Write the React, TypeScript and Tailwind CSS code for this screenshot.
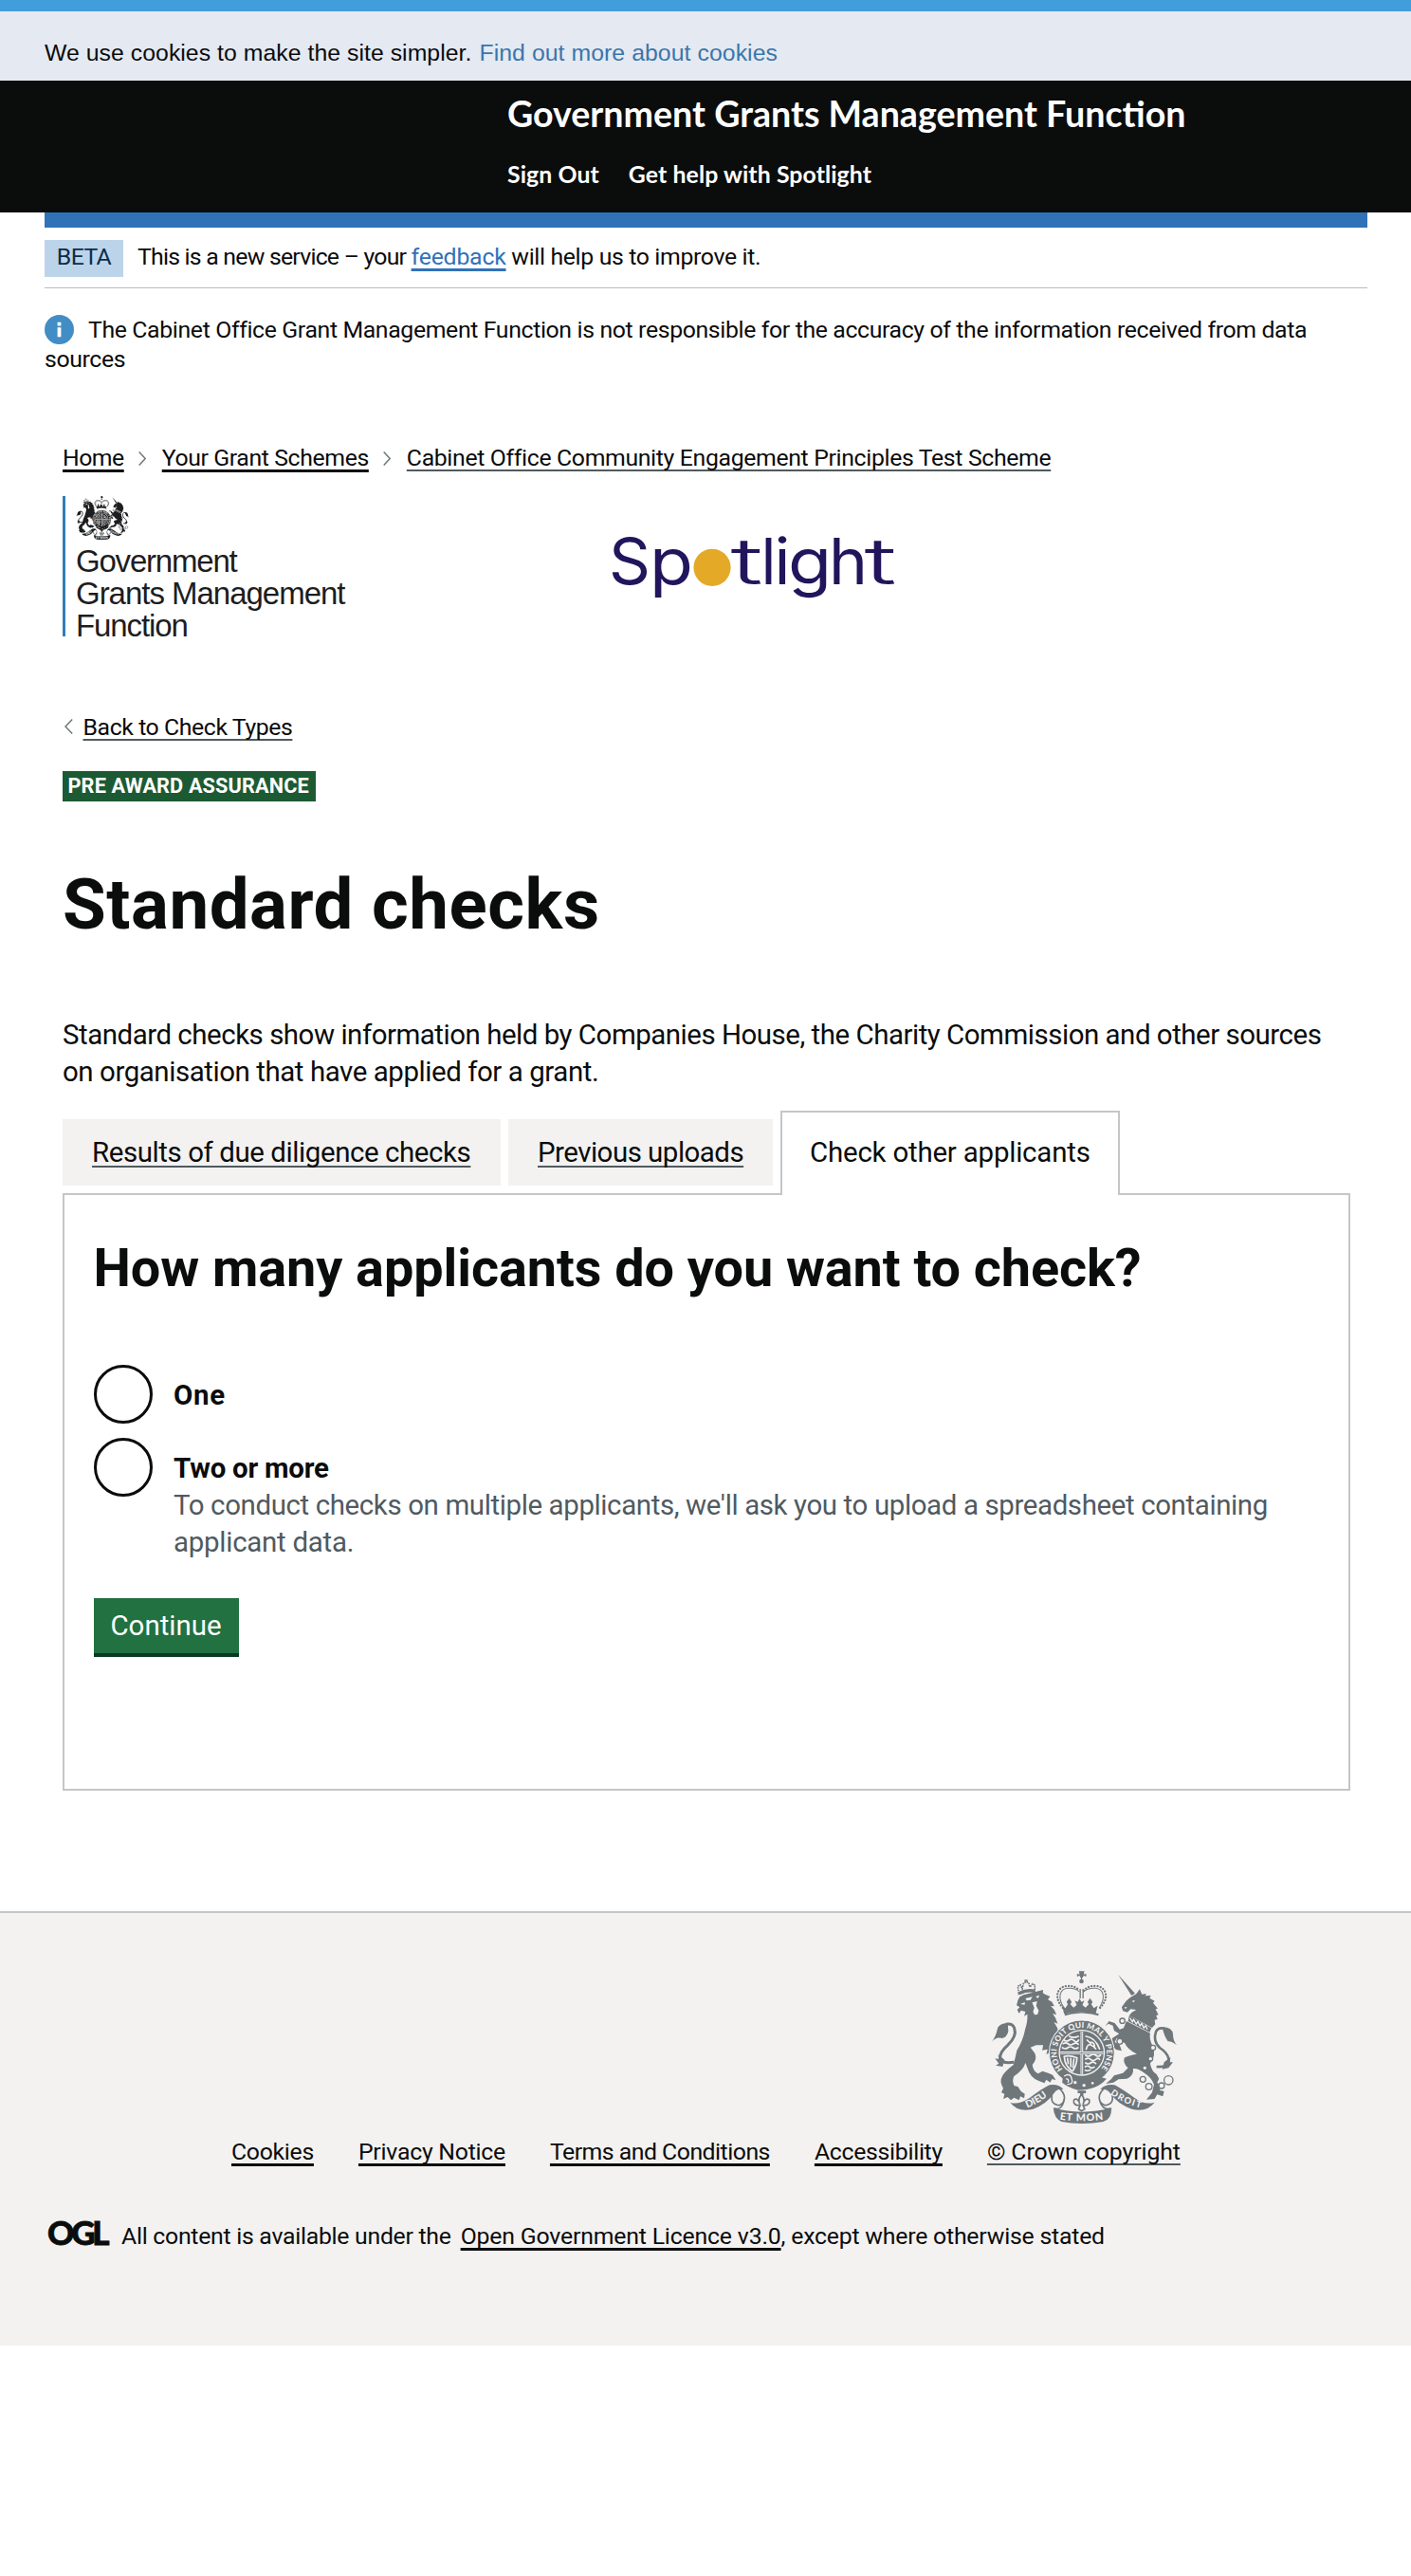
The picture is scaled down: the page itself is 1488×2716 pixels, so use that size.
import React from 'react';

const LINK = 'underline underline-offset-[4px] decoration-[3px] [text-decoration-skip-ink:none] whitespace-nowrap';
const THIN = 'underline underline-offset-[4px] decoration-[1.6px] decoration-[#505a5f] [text-decoration-skip-ink:none] whitespace-nowrap';

/** Royal coat of arms: `bg` is used for the parts knocked out of the silhouette. */
function Crest({ id, color, bg, className }: { id: string; color: string; bg: string; className: string }) {
  return (
    <svg viewBox="75 55 587 483" preserveAspectRatio="none" className={className} fill={color} aria-hidden="true">
      <defs>
        <path id={id + '-ring'} d="M302 366 A79 79 0 1 1 408 378" fill="none" />
        <path id={id + '-left'} d="M189 488 Q237 470 270 436" fill="none" />
        <path id={id + '-right'} d="M452 444 Q490 474 546 488" fill="none" />
        <path id={id + '-mid'} d="M292 525 Q361 535 434 525" fill="none" />
      </defs>

      {/* crown */}
      <path d="M358 76 l-3 -6 -8 3 v-9 l8 2 -2 -10 h17 l-2 10 8 -2 v9 l-8 -3 -3 6z" />
      <circle cx="361" cy="88" r="7" />
      <path d="M359 70 h4 v14 h-4z" />
      <g fill="none" stroke={color} strokeWidth="7" strokeLinecap="round">
        <path d="M302 172 C270 135 288 104 315 103 C335 102 345 106 354 118" strokeDasharray="0.1 9.5" />
        <path d="M420 172 C454 135 434 104 408 103 C388 102 378 106 368 118" strokeDasharray="0.1 9.5" />
      </g>
      <path d="M306 172 C284 140 292 112 318 110 C335 109 346 112 354 121 M417 172 C439 140 431 112 405 110 C388 109 377 112 368 121" fill="none" stroke={color} strokeWidth="3" />
      <path d="M355 112 h4 v30 h-4z M364 112 h4 v30 h-4z" />
      <path d="M300 165 l10 8 8 -12 -4 -8 8 -12 8 12 -4 8 10 10 10 -8 -6 -14 9 4 6 -10 6 10 9 -4 -6 14 10 8 10 -10 -4 -8 8 -12 8 12 -4 8 8 12 12 -8 -6 26 Q361 180 306 191z" />
      <path d="M308 190 Q361 180 415 190 L413 206 Q361 192 309 206z" />

      {/* lion */}
      <path d="M160 148 L166 137 178 131 205 124 240 115 239 125 246 129 262 136 255 146 268 153 275 167 264 166 275 178 282 194 270 190 279 204 286 222 274 217 285 236 288 250 Q272 262 266 280 L292 296 288 330 276 341 267 336 271 325 258 329 263 313 250 319 254 303 237 306 240 290 218 290 200 297 214 316 Q222 334 206 352 Q208 372 224 380 L238 372 258 379 270 384 280 401 268 397 262 408 250 399 244 410 228 404 Q200 396 190 362 L184 346 Q178 368 148 388 Q141 402 148 418 L160 421 170 436 182 444 180 458 168 452 164 464 148 456 138 464 128 454 114 460 118 444 108 440 114 426 Q100 406 112 386 Q120 372 146 352 Q152 330 157 306 Q176 276 183 240 Q192 212 190 192 L180 198 184 184 170 180 164 190 158 178 166 170 156 164z" />
      <path d="M184 142 l22 -5 -6 10 -12 2z M216 136 l12 -4 -4 10z" fill={bg} />
      <path d="M205 155 l16 -4 -3 14 8 16 -4 12 -9 1 -5 -10 4 -12z M168 160 l14 -6 0 8z" fill={bg} />
      <path d="M163 126 L160 104 168 99 174 112 178 94 186 90 194 92 198 106 207 96 214 100 213 122 Q190 116 163 128z" fill="none" stroke={color} strokeWidth="5" strokeDasharray="5 2.5" />
      <path d="M164 120 Q190 108 214 114 L214 123 Q190 118 166 131z" />
      <path d="M181 83 h10 v6 h-10z" />
      <path d="M148 344 Q108 350 104 330 Q103 312 128 290 Q158 262 149 236 Q143 220 122 224" fill="none" stroke={color} strokeWidth="9" />
      <path d="M128 220 Q100 220 95 240 Q92 260 77 280 Q92 262 110 268 Q126 264 130 246z" />
      <path d="M118 336 L98 320 100 334 88 332 100 348 90 354 112 358z" />

      {/* unicorn */}
      <path d="M477 67 L530 126 519 133z" />
      <path d="M545 113 L552 129 566 127 562 134 580 133 576 141 592 150 587 156 602 174 595 176 604 194 597 196 601 208 592 210 594 224 584 235 L512 196 Q520 184 534 178 L516 176 506 186 492 182 488 170 502 150 514 140 534 128z" />
      <path d="M520 150 l10 -2 -4 7z M496 170 l9 0 -5 6z" fill={bg} />
      <path d="M512 196 L582 236 576 249 508 214z" />
      <path d="M514 204 l8 12 4 -7 8 14 5 -8 7 14 5 -8 7 14 6 -7 5 12" fill="none" stroke={bg} strokeWidth="4" />
      <path d="M503 214 L578 252 Q574 272 586 292 Q598 322 578 348 Q582 372 598 382 L606 396 600 408 612 420 608 432 622 436 618 452 600 446 592 460 566 462 584 440 590 414 Q582 392 560 378 Q540 362 524 364 Q528 386 504 396 L478 398 462 408 438 412 456 396 464 386 492 378 508 362 Q492 348 496 330 Q510 322 536 318 Q506 304 498 284 L484 276 472 268 466 280 482 290 488 308 470 304 456 290 458 268 480 254 464 244 460 228 446 222 436 230 448 214 466 220 482 240 494 236z" />
      <path d="M598 358 Q640 362 636 332 Q632 314 608 298 Q586 276 596 248 Q604 232 624 238" fill="none" stroke={color} strokeWidth="8" />
      <path d="M616 233 Q648 232 650 256 Q650 276 662 290 Q644 276 634 278 Q622 262 616 233z" />
      <path d="M622 344 L642 328 640 344 650 344 636 362 616 366z" />
      <g fill={bg} stroke={color} strokeWidth="4">
        <circle cx="490" cy="213" r="8" /><circle cx="482" cy="278" r="9" /><circle cx="587" cy="298" r="8" />
        <circle cx="579" cy="333" r="7" /><circle cx="561" cy="362" r="7" /><circle cx="555" cy="398" r="9" />
        <circle cx="574" cy="421" r="10" /><circle cx="614" cy="418" r="9" /><circle cx="636" cy="401" r="14" />
      </g>

      {/* garter with shield */}
      <circle cx="362" cy="314" r="103" stroke={bg} strokeWidth="3" />
      <path d="M300 199 Q361 178 423 199 L415 213 Q361 196 307 213z" fill={bg} />
      <circle cx="362" cy="314" r="73" fill={bg} />
      <circle cx="362" cy="314" r="69" />
      <path d="M358 246 h8 v136 h-8z M294 310 h136 v8 h-136z" fill={bg} />
      <path d="M361 246 h2 v136 h-2z M294 313 h136 v2 h-136z" />
      <g fill="none" stroke={bg} strokeWidth="5" strokeLinecap="round" strokeLinejoin="round">
        <path d="M323 262 q12 7 28 0 M306 274 q8 6 16 0 t16 2 t14 -2 M303 285 q9 -5 16 1 t16 0 t16 1 M301 298 q9 6 17 0 t16 0 t16 0" />
        <path d="M374 322 q8 6 16 0 t16 0 t15 0 M374 334 q9 -6 16 1 t16 0 t12 0 M374 346 q8 6 16 0 t16 2 M373 358 q8 -5 14 1 t14 0 M373 369 q8 4 16 -1" />
        <path d="M375 262 q30 4 43 40 M376 303 q4 -18 14 -14 t16 12 M379 274 l11 10 M392 280 q12 4 10 18" />
        <path d="M306 326 q17 -6 41 4 q-2 26 -14 42 M307 330 q2 24 22 40 M317 332 l2 16 M327 332 l0 26 M337 334 l-3 26" />
      </g>
      <text fontFamily="Lato" fontWeight="900" fontSize="25" fill={bg}>
        <textPath href={'#' + id + '-ring'} textLength="358">HONI SOIT QUI MAL Y PENSE</textPath>
      </text>
      <path d="M303 384 Q330 408 375 408 Q405 406 424 392 L440 396 Q410 432 350 432 Q318 424 300 408z" />
      <circle cx="341" cy="408" r="5" fill={bg} /><circle cx="369" cy="417" r="5" fill={bg} /><circle cx="396" cy="410" r="4" fill={bg} />
      <path d="M306 388 q20 -12 24 8 q8 18 -14 18 M312 396 q12 2 6 12" fill="none" stroke={bg} strokeWidth="4" />

      {/* motto ribbon */}
      <path d="M136 471 Q160 480 196 458 Q232 430 260 416 Q290 412 304 430 Q284 426 276 440 Q250 478 208 492 Q160 504 136 471z" />
      <path d="M592 471 Q560 480 530 458 Q492 430 466 416 Q436 412 420 430 Q440 426 450 440 Q476 478 520 492 Q566 504 592 471z" />
      <path d="M272 488 Q361 514 456 488 Q456 526 430 532 Q361 544 298 532 Q274 522 272 488z" />
      <path d="M268 448 Q262 478 292 480 Q312 470 306 448 Q298 428 284 424 M458 448 Q464 478 434 480 Q412 470 418 448 Q426 428 440 424 M275 490 Q300 498 306 462 M453 490 Q426 498 418 462" fill="none" stroke={color} strokeWidth="5" />
      <g fontFamily="Lato" fontWeight="900" fill={bg}>
        <text fontSize="31"><textPath href={'#' + id + '-left'}>DIEU</textPath></text>
        <text fontSize="28"><textPath href={'#' + id + '-right'} textLength="106">DROIT</textPath></text>
        <text fontSize="32"><textPath href={'#' + id + '-mid'} textLength="138">ET MON</textPath></text>
      </g>
      <path d="M349 434 h26 v8 h-8 v8 h-10 v-8 h-8z" />
      <path d="M361 446 Q374 462 366 476 Q372 456 385 462 Q390 474 376 480 L366 480 371 492 361 498 352 492 357 480 346 480 Q332 474 338 462 Q350 456 356 476 Q348 462 361 446z" fill={bg} stroke={color} strokeWidth="5" />
    </svg>
  );
}

// Letter, left edge, advance width and weight: the wordmark is set wider than the base font.
const LETTERS: [string, number, number, number][] = [
  ['S', 642, 44, 400],
  ['p', 685, 46, 400],
  ['t', 770.5, 34, 300],
  ['l', 802.5, 16, 400],
  ['i', 816.5, 17, 400],
  ['g', 831, 46, 400],
  ['h', 874, 41, 400],
  ['t', 911.5, 34, 300],
];

function Spotlight() {
  return (
    <svg className="mt-[22px] block h-[110px] w-[320px]" viewBox="640 545 320 110" role="img" aria-label="Spotlight">
      <g fontFamily="Inter" fontSize="67.5" fill="#22155c">
        {LETTERS.map(([c, x, w, weight], i) => (
          <text key={i} x={x} y="615.6" textLength={w} lengthAdjust="spacingAndGlyphs" fontWeight={weight}>{c}</text>
        ))}
      </g>
      <circle cx="751" cy="598.3" r="19.6" fill="#e4a927" />
    </svg>
  );
}

const Chevron = () => (
  <svg className="mt-[9px] h-[15px] w-[8px] shrink-0" viewBox="0 0 8 15" fill="none" stroke="#6f777b" strokeWidth="1.5">
    <path d="M.7 .5 7.2 7.5 .7 14.5" />
  </svg>
);

function Radio({ children }: { children: React.ReactNode }) {
  return (
    <div className="flex h-[62px]">
      <span className="h-[62px] w-[62px] shrink-0 rounded-full border-[3px] border-[#0b0c0c]" />
      <div className="ml-[22.5px] pt-[13px] text-[29.45px] leading-[39px]">{children}</div>
    </div>
  );
}

export default function App() {
  return (
    <div className="min-h-[2716px] w-[1488px] overflow-hidden bg-white font-[Roboto,sans-serif] text-[24.8px] leading-[31px] text-[#0b0c0c]">
      <div className="h-[12.4px] bg-[#429ddb]" />
      <div className="h-[72.6px] bg-[#e5e9f1] pl-[47px] pt-[24.6px] font-['Liberation_Sans',sans-serif] leading-[38px]">
        <span className="tracking-[0.04px]">We use cookies to make the site simpler.</span>
        <a className="ml-[8px] tracking-[0.06px] text-[#3a76ab]">Find out more about cookies</a>
      </div>

      <header className="h-[139.5px] bg-[#0b0c0c] pl-[535px] pt-[15px] font-[Lato,sans-serif] font-bold text-white">
        <div className="text-[37.6px] leading-[40px]">Government Grants Management Function</div>
        <nav className="mt-[24px] flex gap-[31px] leading-[40px]">
          <a className="tracking-[0.1px]">Sign Out</a>
          <a className="tracking-[0.1px]">Get help with Spotlight</a>
        </nav>
      </header>

      <div className="mx-[47px] w-[1395px]">
        <div className="h-[16px] bg-[#3072b8]" />
        <div className="mt-[12.5px] flex border-b-[1.5px] border-[#b9bcbd] pb-[11px] leading-[35px]">
          <span className="h-[39px] w-[83px] bg-[#bbd4ea] text-center tracking-[-0.6px] text-[#0c2d4a]">BETA</span>
          <p className="ml-[15px] whitespace-pre">
            <span className="tracking-[-0.77px]">This is a new service – your </span>
            <a className="tracking-[-0.2px] text-[#3072b8] underline decoration-[3px] underline-offset-[4px] [text-decoration-skip-ink:none]">feedback</a>
            <span className="tracking-[-0.35px]"> will help us to improve it.</span>
          </p>
        </div>
        <p className="mt-[28px] whitespace-nowrap tracking-[-0.355px]">
          <svg className="mr-[15px] inline-block h-[31px] w-[31px] align-top" viewBox="0 0 31 31">
            <circle cx="15.5" cy="15.5" r="15.5" fill="#428dc5" />
            <path d="M13.6 7.8h3.8v3.6h-3.8zM13.6 13.2h3.8v10h-3.8z" fill="#fff" />
          </svg>
          The Cabinet Office Grant Management Function is not responsible for the accuracy of the information received from data
          <br />
          sources
        </p>
      </div>

      <main className="ml-[66px] mt-[73px] w-[1358px]">
        <nav className="flex">
          <a className={LINK + ' tracking-[-0.5px]'}>Home</a>
          <span className="ml-[15px] mr-[17px]"><Chevron /></span>
          <a className={LINK + ' tracking-[-0.38px]'}>Your Grant Schemes</a>
          <span className="ml-[15px] mr-[17px]"><Chevron /></span>
          <a className={THIN + ' tracking-[-0.34px]'}>Cabinet Office Community Engagement Principles Test Scheme</a>
        </nav>

        <div className="mt-[25px] flex h-[148px]">
          <div className="w-[574px] border-l-[3px] border-[#2f7fb8] pl-[11px]">
            <Crest id="small" color="#1d1d1f" bg="#fff" className="block h-[46px] w-[56px]" />
            <div className="mt-[6px] font-['Liberation_Sans',sans-serif] text-[33px] leading-[34px] text-[#1d1d1f]">
              <div className="tracking-[-1.2px]">Government</div>
              <div className="tracking-[-1.02px]">Grants Management</div>
              <div className="tracking-[-1.1px]">Function</div>
            </div>
          </div>
          <Spotlight />
        </div>

        <a className="mt-[80px] flex">
          <svg className="ml-[2px] mr-[10.5px] mt-[7px] h-[16px] w-[9px]" viewBox="0 0 9 16" fill="none" stroke="#6f777b" strokeWidth="1.5">
            <path d="M8.2 .5 1 8l7.2 7.5" />
          </svg>
          <span className={THIN + ' tracking-[-0.4px]'}>Back to Check Types</span>
        </a>

        <strong className="mt-[31px] block h-[32px] w-[267px] whitespace-nowrap bg-[#1c5a33] pl-[5.5px] text-[21.7px] leading-[31px] tracking-[0.14px] text-white">PRE AWARD ASSURANCE</strong>

        <h1 className="mt-[70px] text-[74.4px] font-bold leading-[78px] tracking-[0.55px]">Standard checks</h1>

        <p className="mt-[79px] whitespace-nowrap text-[29.45px] leading-[39px] tracking-[-0.47px]">
          Standard checks show information held by Companies House, the Charity Commission and other sources
          <br />
          <span className="tracking-[-0.43px]">on organisation that have applied for a grant.</span>
        </p>

        <div className="mt-[21px] flex h-[87px] text-[29.45px] leading-[39px]">
          <div className="mt-[9px] h-[70px] w-[462px] bg-[#f3f2f1] pl-[31px] pt-[16px]">
            <a className={THIN + ' tracking-[-0.41px]'}>Results of due diligence checks</a>
          </div>
          <div className="ml-[8px] mt-[9px] h-[70px] w-[279px] bg-[#f3f2f1] pl-[31px] pt-[16px]">
            <a className={THIN + ' tracking-[-0.5px]'}>Previous uploads</a>
          </div>
          <div className="relative ml-[8px] h-[89px] w-[358px] whitespace-nowrap border-2 border-b-0 border-[#c4c6c7] bg-white pl-[29px] pt-[23px] tracking-[-0.2px]">
            Check other applicants
          </div>
        </div>

        <section className="h-[630px] border-2 border-[#c4c6c7] pl-[30.5px] pt-[48px]">
          <h2 className="whitespace-nowrap text-[55.8px] font-bold leading-[58px] tracking-[-0.06px]">How many applicants do you want to check?</h2>
          <div className="mt-[73px] flex flex-col gap-[15px]">
            <Radio><b className="tracking-[0.7px]">One</b></Radio>
            <Radio>
              <b className="block tracking-[-0.25px]">Two or more</b>
              <p className="whitespace-nowrap leading-[39.5px] tracking-[-0.375px] text-[#505a5f]">
                To conduct checks on multiple applicants, we'll ask you to upload a spreadsheet containing
                <br />
                <span className="tracking-[-0.25px]">applicant data.</span>
              </p>
            </Radio>
          </div>
          <button className="mt-[107px] block h-[62px] w-[153px] border-b-[4px] border-[#0a3a20] bg-[#227140] text-[29.45px] leading-[59px] text-white">Continue</button>
        </section>
      </main>

      <footer className="mt-[127px] h-[458px] border-t-2 border-[#c4c6c7] bg-[#f3f2f1] pt-[61px]">
        <nav className="ml-[244px] flex items-end gap-[47px]">
          <a className={LINK + ' tracking-[-0.29px]'}>Cookies</a>
          <a className={LINK + ' tracking-[-0.24px]'}>Privacy Notice</a>
          <a className={LINK + ' tracking-[-0.5px]'}>Terms and Conditions</a>
          <a className={LINK + ' tracking-[-0.29px]'}>Accessibility</a>
          <div className="flex flex-col">
            <Crest id="footer" color="#6f777b" bg="#f3f2f1" className="mb-[14px] ml-[4px] block h-[161px] w-[196px]" />
            <a className={THIN + ' tracking-[-0.08px]'}>© Crown copyright</a>
          </div>
        </nav>
        <div className="mt-[58px] flex whitespace-pre pl-[50px]">
          <span className="w-[78px] font-[Lato,sans-serif] text-[35px] font-black leading-[23px] tracking-[-3.2px] [-webkit-text-stroke:0.8px_#0b0c0c]">OGL</span>
          <span className="tracking-[-0.27px]">All content is available under the</span>
          <a className={LINK + ' ml-[10px] tracking-[-0.17px]'}>Open Government Licence v3.0</a>
          <span className="tracking-[-0.2px]">, except where otherwise stated</span>
        </div>
      </footer>
    </div>
  );
}
